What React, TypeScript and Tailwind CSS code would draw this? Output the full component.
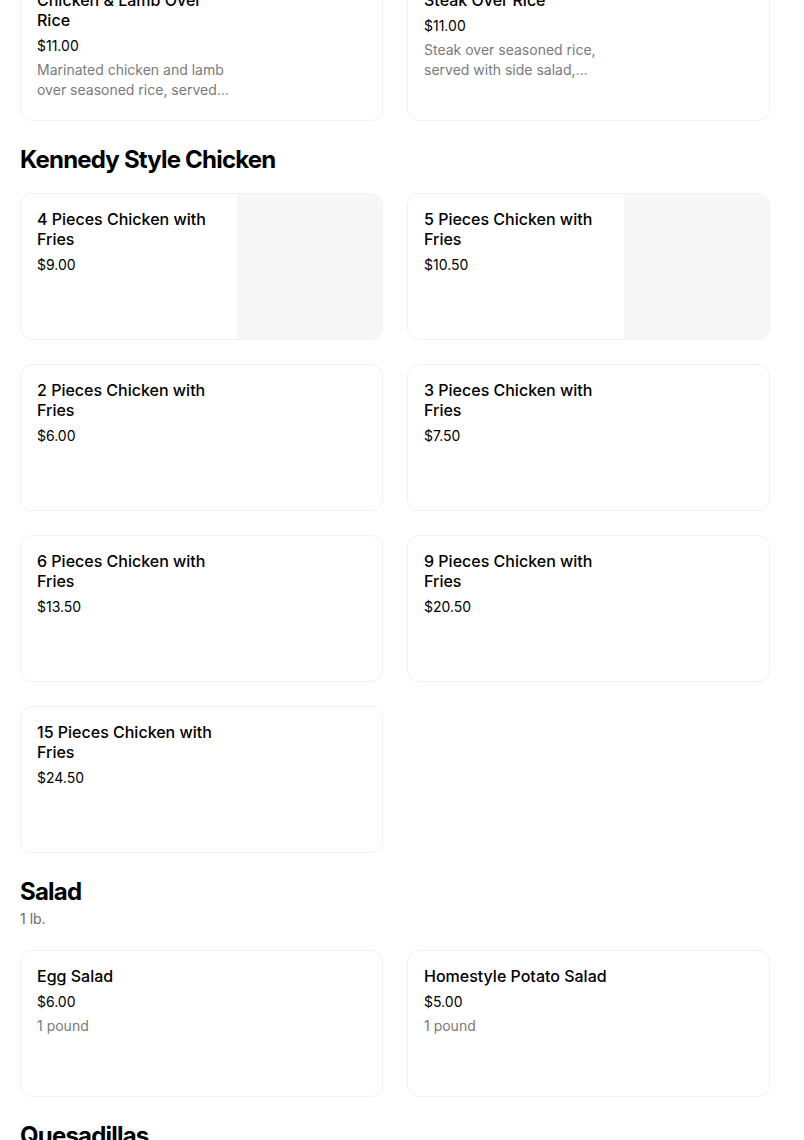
import React from "react";

interface Item {
  name: string;
  price: string;
  desc?: string;
  image?: boolean;
}

interface Section {
  title?: string;
  subtitle?: string;
  items: Item[];
  headGap: string;
}

const sections: Section[] = [
  {
    headGap: "",
    items: [
      {
        name: "Chicken & Lamb Over Rice",
        price: "$11.00",
        desc: "Marinated chicken and lamb over seasoned rice, served…",
      },
      {
        name: "Steak Over Rice",
        price: "$11.00",
        desc: "Steak over seasoned rice, served with side salad,…",
      },
    ],
  },
  {
    title: "Kennedy Style Chicken",
    headGap: "mb-[17px]",
    items: [
      { name: "4 Pieces Chicken with Fries", price: "$9.00", image: true },
      { name: "5 Pieces Chicken with Fries", price: "$10.50", image: true },
      { name: "2 Pieces Chicken with Fries", price: "$6.00" },
      { name: "3 Pieces Chicken with Fries", price: "$7.50" },
      { name: "6 Pieces Chicken with Fries", price: "$13.50" },
      { name: "9 Pieces Chicken with Fries", price: "$20.50" },
      { name: "15 Pieces Chicken with Fries", price: "$24.50" },
    ],
  },
  {
    title: "Salad",
    subtitle: "1 lb.",
    headGap: "mb-[21px]",
    items: [
      { name: "Egg Salad", price: "$6.00", desc: "1 pound" },
      { name: "Homestyle Potato Salad", price: "$5.00", desc: "1 pound" },
    ],
  },
  {
    title: "Quesadillas",
    headGap: "mb-[17px]",
    items: [],
  },
];

function MenuCard({ item }: { item: Item }) {
  return (
    <div className="flex h-[147px] overflow-hidden rounded-xl border border-[#f1f1f1] bg-white">
      <div className="flex-1 px-4 pt-[15px]">
        <div className="max-w-[200px]">
          <p className="text-[16px] font-medium leading-5 text-black">{item.name}</p>
          <p className="mt-[6px] text-[14px] leading-5 text-black">{item.price}</p>
          {item.desc && (
            <p className="mt-1 text-[14px] leading-5 text-[#7a7a7a]">{item.desc}</p>
          )}
        </div>
      </div>
      {item.image && <div className="w-[145px] bg-[#f7f7f7]" />}
    </div>
  );
}

export default function App() {
  return (
    <div
      className="min-h-[1140px] overflow-hidden bg-white"
      style={{ fontFamily: "Inter, 'Noto Sans', sans-serif" }}
    >
      <div className="-mt-[26px] ml-5 w-[750px]">
        {sections.map((s, i) => (
          <div key={i} className={i > 0 ? "mt-[23px]" : ""}>
            {s.title && (
              <div className={s.headGap}>
                <h2 className="text-[24px] font-bold leading-8 tracking-[-0.8px] text-black">
                  {s.title}
                </h2>
                {s.subtitle && (
                  <p className="mt-[1px] text-[14px] leading-5 text-[#6b6b6b]">{s.subtitle}</p>
                )}
              </div>
            )}
            {s.items.length > 0 && (
              <div className="grid grid-cols-2 gap-x-6 gap-y-6">
                {s.items.map((it) => (
                  <MenuCard key={it.name} item={it} />
                ))}
              </div>
            )}
          </div>
        ))}
      </div>
    </div>
  );
}
